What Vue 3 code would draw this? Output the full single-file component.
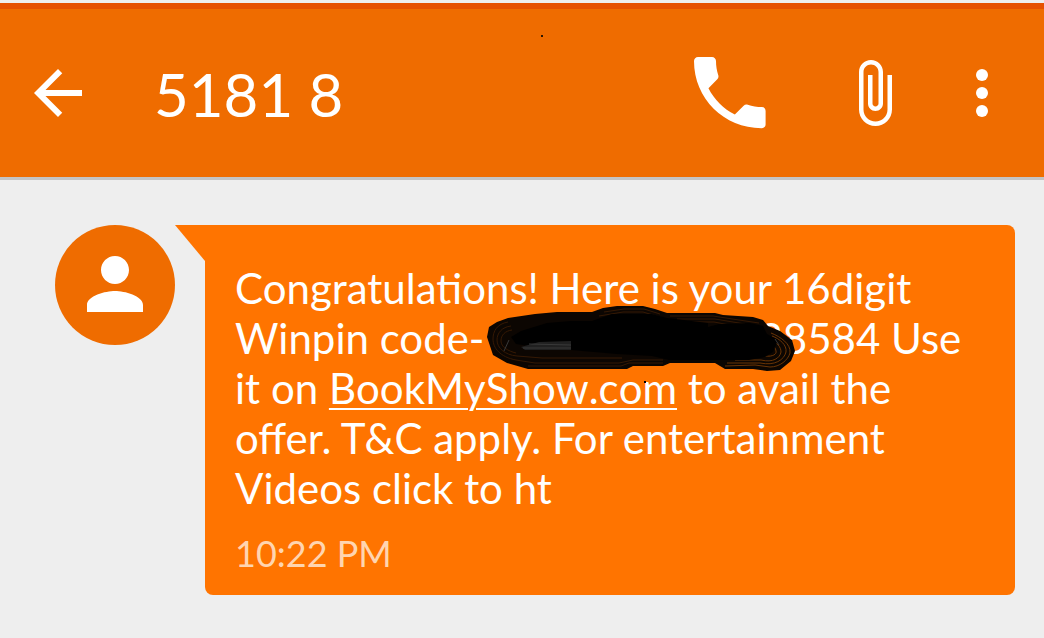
<script setup>
const contact = '5181 8'
const time = '10:22 PM'
</script>

<template>
  <main class="screen">
    <div class="status"></div>
    <header class="bar">
      <button class="icon-btn" type="button" aria-label="Back">
        <svg class="icon" viewBox="0 0 24 24"><path d="M20 11H7.83l5.59-5.59L12 4l-8 8 8 8 1.41-1.41L7.83 13H20z" /></svg>
      </button>
      <h1 class="title">{{ contact }}</h1>
      <button class="icon-btn" type="button" aria-label="Call">
        <svg class="icon large" viewBox="0 0 24 24"><path d="M6.62 10.79c1.44 2.83 3.76 5.14 6.59 6.59l2.2-2.2c.27-.27.67-.36 1.02-.24 1.12.37 2.33.57 3.57.57.55 0 .9.45.9 1V19.9c0 .55-.45.9-1 .9C10.5 20.8 3 13.39 3 4c0-.55.45-1 1-1h3.5c.55 0 1 .45 1 1 0 1.25.2 2.45.57 3.57.11.35.03.74-.25 1.02l-2.2 2.2z" /></svg>
      </button>
      <button class="icon-btn attach" type="button" aria-label="Attach">
        <svg class="icon" viewBox="0 0 24 24"><path d="M16.5 6v11.5c0 2.21-1.79 4-4 4s-4-1.79-4-4V5c0-1.38 1.12-2.5 2.5-2.5s2.5 1.12 2.5 2.5v10.5c0 .55-.45 1-1 1s-1-.45-1-1V6H10v9.5c0 1.38 1.12 2.5 2.5 2.5s2.5-1.12 2.5-2.5V5c0-2.21-1.79-4-4-4S7 2.79 7 5v12.5c0 3.04 2.46 5.5 5.5 5.5s5.5-2.46 5.5-5.5V6z" /></svg>
      </button>
      <button class="icon-btn more" type="button" aria-label="More options">
        <svg class="icon" viewBox="0 0 24 24"><circle cx="12" cy="6" r="2" /><circle cx="12" cy="12" r="2" /><circle cx="12" cy="18" r="2" /></svg>
      </button>
      <span class="speck"></span>
    </header>

    <section class="thread">
      <div class="avatar">
        <svg viewBox="0 0 24 24"><path d="M12 12c2.21 0 4-1.79 4-4s-1.79-4-4-4-4 1.79-4 4 1.79 4 4 4zm0 2c-2.67 0-8 1.34-8 4v2h16v-2c0-2.66-5.33-4-8-4z" /></svg>
      </div>
      <svg class="tail" viewBox="0 0 30 36"><path d="M0 0h30v36z" /></svg>
      <article class="bubble">
        <p class="text">Congratulations! Here is your 16digit<br />Winpin code-<span class="hidden"><svg class="scribble" viewBox="0 0 312 70">
          <path class="ink" d="M0 31L2 21 10 16 21 12 48 8 70 6H105L116 2 130 0H156L168 3 180 7H228L236 9 266 11 276 14 281 20 293 25 305 34 308 45 304 55 293 64 280 65 266 63H238L228 57H183L176 60H146L140 63H41L20 57 6 49Z" />
          <path class="brown" d="M21 16C10 18 6 25 6 33c0 9 7 18 23 21l19 3h84l14-3h30M24 20c-9 1-14 7-14 14 0 8 8 15 20 16l25 2h80M25 24c-7 1-11 5-11 11 0 6 7 10 15 12M117 6l20-3h20l16 5M112 10l24-4h20l20 6M183 10h43l26 4 20 3M190 13h38l30 5M205 16h22l16 3M41 60h93l8-3h34" />
          <path class="rim" d="M238 60l30-1 15 2c10 0 18-7 20-14 1-9-9-16-19-20M240 57h33c15 3 24-3 26-11 1-7-6-13-14-16M248 54h26c12 3 19-2 20-8 0-5-4-10-10-11M278 50c8 1 12-2 11-5 0-3-3-6-6-7" />
          <path class="black" d="M24 31L34 25 60 17 84 15H105L125 8H165L180 12 221 17V21L232 18 263 17 276 20 280 28 291 34 286 46 278 51 262 54H182L165 50 130 48 84 44H70L29 38Z" />
          <path class="sheen" d="M52 36L84 35V44H38L34 41Z" />
          <path class="grey" d="M42 38l42 1M36 42h48M22 34l-5 11M288 33l4 6" />
          <rect class="black" x="157" y="75" width="2" height="2" />
        </svg></span>38584 Use<br />it on <a href="#bookmyshow">BookMyShow.com</a> to avail the<br />offer. T&amp;C apply. For entertainment<br />Videos click to ht</p>
        <time class="time">{{ time }}</time>
      </article>
    </section>
  </main>
</template>

<style>
body {
  margin: 0;
  background: #eee;
}
</style>

<style scoped>
.screen {
  padding-top: 3px;
  font-family: Lato, Carlito, "Open Sans", sans-serif;
  color: #fff;
}
.status {
  height: 6px;
  background: #e65100;
}
.bar {
  position: relative;
  display: flex;
  align-items: center;
  height: 168px;
  padding: 0 26px 0 22px;
  background: #ef6c00;
  box-shadow: 0 3px 0 #c4c4c4;
}
.icon-btn {
  display: flex;
  padding: 0;
  border: 0;
  background: none;
}
.icon {
  width: 72px;
  height: 72px;
  fill: #fff;
}
.large {
  width: 96px;
  height: 96px;
}
.title {
  flex: 1;
  margin: 0 0 0 60px;
  padding-top: 2px;
  font-size: 60px;
  line-height: 72px;
  font-weight: 400;
}
.attach {
  margin-left: 60px;
}
.more {
  margin-left: 36px;
}
.speck {
  position: absolute;
  top: 26px;
  left: 541px;
  width: 2px;
  height: 2px;
  background: #2b1600;
}
.thread {
  display: flex;
  align-items: flex-start;
  padding: 48px 29px 43px 55px;
}
.avatar {
  box-sizing: border-box;
  display: flex;
  flex: none;
  align-items: center;
  justify-content: center;
  width: 120px;
  height: 120px;
  padding-bottom: 2px;
  border-radius: 50%;
  background: #ef6c00;
}
.avatar svg {
  width: 84px;
  height: 84px;
  fill: #fff;
}
.tail {
  flex: none;
  width: 30px;
  height: 36px;
  fill: #ff7400;
}
.bubble {
  flex: 1;
  padding: 38px 30px 20px;
  border-radius: 0 8px 8px 8px;
  background: #ff7400;
}
.text {
  margin: 0;
  font-size: 42px;
  line-height: 50px;
  white-space: nowrap;
}
.text a {
  color: inherit;
  font-kerning: none;
  text-decoration-thickness: 2px;
  text-underline-offset: 4px;
}
.hidden {
  position: relative;
  display: inline-block;
  width: 274px;
  height: 30px;
}
.scribble {
  position: absolute;
  left: 3px;
  top: -18px;
  width: 312px;
  height: 70px;
  overflow: visible;
  fill: none;
}
.ink {
  fill: #0c0602;
}
.brown {
  stroke: #351904;
  stroke-width: 1;
}
.rim {
  stroke: #6b3505;
  stroke-width: 1;
}
.grey {
  stroke: #393939;
  stroke-width: 1;
}
.sheen {
  fill: #202020;
}
.black {
  fill: #000;
}
.time {
  display: block;
  margin-top: 18px;
  font-size: 36px;
  line-height: 44px;
  color: #ffd5b0;
}
</style>
